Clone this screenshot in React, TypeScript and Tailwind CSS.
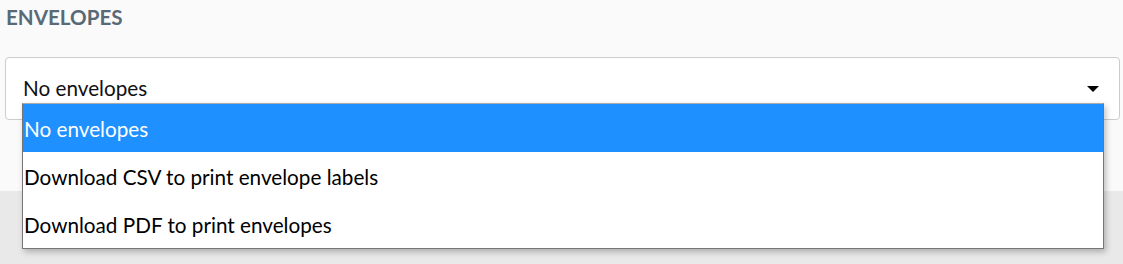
export default function App() {
  const options = [
    "No envelopes",
    "Download CSV to print envelope labels",
    "Download PDF to print envelopes",
  ];

  return (
    <div className="w-[1123px] h-[264px] bg-[#e9e9e9] font-['Lato','Liberation_Sans',sans-serif] overflow-hidden">
      <div className="h-[191px] bg-[#fafafa] pt-[5px] pl-[5px] pr-[3px]">
        <h2 className="pl-[1px] text-[20.6px] leading-[25px] font-bold uppercase text-[#596a76]">Envelopes</h2>

        <div className="relative mt-[27px]">
          <div className="h-[63px] bg-white border border-[#cccccc] rounded-[4px] flex items-center pl-[17px] pr-[20px]">
            <span className="flex-1 text-[20.7px] text-[#111]">No envelopes</span>
            <svg width="12" height="6" viewBox="0 0 12 6" className="mt-[1px]">
              <path d="M0 0 H12 L6 6 Z" fill="#000" />
            </svg>
          </div>

          {/* Open native-style dropdown */}
          <div className="absolute left-[17px] top-[46px] w-[1082px] bg-white border border-[#767676] border-t-[#aaaaaa] shadow-[2px_3px_6px_rgba(0,0,0,0.25)] z-10">
            {options.map((o, i) => (
              <div
                key={o}
                className={
                  i === 0
                    ? "h-[48px] flex items-center pl-[1px] pt-[4px] text-[20.7px] bg-[#1e90ff] text-white"
                    : "h-[48px] flex items-center pl-[1px] pt-[4px] text-[20.7px] text-black"
                }
              >
                {o}
              </div>
            ))}
          </div>
        </div>
      </div>
    </div>
  );
}
